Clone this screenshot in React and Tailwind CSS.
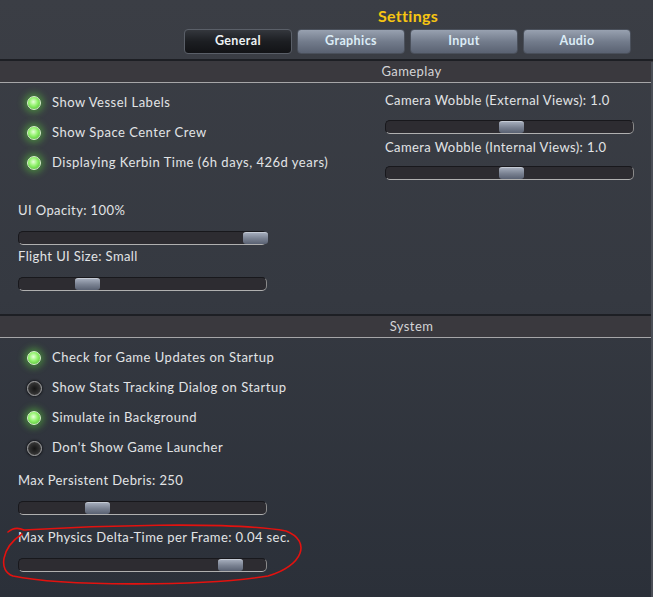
import React from 'react'

const FONT = { fontFamily: 'Lato, "Noto Sans", sans-serif' }

function Light({ on }) {
  return on ? (
    <span className="block w-[14px] h-[14px] rounded-full border border-[#d6f5c8] bg-[radial-gradient(circle_at_45%_40%,#e6ffd8_0%,#8ef068_45%,#44b02c_100%)] shadow-[0_0_7px_3px_rgba(96,220,60,0.45)]" />
  ) : (
    <span className="block w-[15px] h-[15px] rounded-full border border-[#a0a0a0] bg-[radial-gradient(circle_at_50%_50%,#151515_0%,#303030_55%,#626262_100%)] shadow-[0_0_2px_1px_rgba(0,0,0,0.5)]" />
  )
}

function Toggle({ on, label }) {
  return (
    <div className="flex items-center h-[30px]">
      <div className="w-[36px] flex justify-center">
        <Light on={on} />
      </div>
      <span className="text-[13px] text-[#e2e4e6] tracking-[0.5px]">{label}</span>
    </div>
  )
}

function Slider({ label, thumb, gap = 'mt-[13px]' }) {
  return (
    <div>
      <div className="h-[16px] leading-[16px] text-[13px] text-[#e2e4e6] tracking-[0.4px]">{label}</div>
      <div className={`relative ${gap} h-[14px] w-[249px] rounded-[5px] bg-[#2d2c31] border border-[#18181c] border-b-[#b0b0b0] border-r-[#8a8a8a]`}>
        <div
          className="absolute top-0 bottom-0 w-[25px] rounded-[3px] bg-gradient-to-b from-[#a3abba] via-[#7a8292] to-[#596172] border-t border-[#c4cad4]"
          style={{ left: thumb }}
        />
      </div>
    </div>
  )
}

function Header({ title }) {
  return (
    <div className="border-t-2 border-[#1d1f24]">
      <div className="h-[22px] bg-[#3a393e] border-b border-[#a6a6a8] flex items-center pl-[170px] justify-center">
        <span className="text-[13px] text-[#d4d4d6] tracking-[0.4px]">{title}</span>
      </div>
    </div>
  )
}

function Tab({ label, active }) {
  return active ? (
    <div className="w-[108px] h-[25px] rounded-[4px] border border-[#5a5f68] bg-gradient-to-b from-[#34373d] via-[#1c1e22] to-[#121316] flex items-center justify-center">
      <span className="text-[12.5px] font-bold text-[#eef2f4] tracking-[0.4px]">{label}</span>
    </div>
  ) : (
    <div className="w-[108px] h-[25px] rounded-[4px] border border-[#4a505b] bg-gradient-to-b from-[#98a1b0] via-[#737c8c] to-[#5a6272] flex items-center justify-center">
      <span className="text-[12.5px] font-bold text-[#dcecf6] tracking-[0.4px]">{label}</span>
    </div>
  )
}

export default function App() {
  return (
    <div className="relative w-[653px] h-[597px] overflow-hidden bg-gradient-to-b from-[#3b3e45] via-[#353941] to-[#2b3039]" style={FONT}>
      {/* Title and tabs */}
      <div className="h-[59px] pl-[184px] pt-[6px]">
        <div className="w-[448px] text-center text-[16px] font-bold leading-[20px] text-[#f7c512] tracking-[0.3px]">Settings</div>
        <div className="mt-[3px] flex gap-[5px]">
          <Tab label="General" active />
          <Tab label="Graphics" />
          <Tab label="Input" />
          <Tab label="Audio" />
        </div>
      </div>

      <Header title="Gameplay" />

      {/* Gameplay */}
      <div className="h-[231px] flex">
        <div className="w-[385px] pl-[18px]">
          <div className="-ml-[2px] pt-[5px]">
            <Toggle on label="Show Vessel Labels" />
            <Toggle on label="Show Space Center Crew" />
            <Toggle on label="Displaying Kerbin Time (6h days, 426d years)" />
          </div>
          <div className="mt-[24px] flex flex-col gap-[3px]">
            <Slider label="UI Opacity: 100%" thumb={224} />
            <Slider label="Flight UI Size: Small" thumb={56} />
          </div>
        </div>
        <div className="pt-[9px] flex flex-col gap-[5px]">
          <Slider label="Camera Wobble (External Views): 1.0" thumb={113} gap="mt-[12px]" />
          <Slider label="Camera Wobble (Internal Views): 1.0" thumb={113} gap="mt-[11px]" />
        </div>
      </div>

      <Header title="System" />

      {/* System */}
      <div className="pl-[16px] pt-[5px]">
        <Toggle on label="Check for Game Updates on Startup" />
        <Toggle label="Show Stats Tracking Dialog on Startup" />
        <Toggle on label="Simulate in Background" />
        <Toggle label="Don't Show Game Launcher" />
      </div>
      <div className="pl-[18px] mt-[9px] flex flex-col gap-[14px]">
        <Slider label="Max Persistent Debris: 250" thumb={66} />
        <Slider label="Max Physics Delta-Time per Frame: 0.04 sec." thumb={199} />
      </div>

      {/* red annotation */}
      <svg className="absolute inset-0 pointer-events-none" width="653" height="597" viewBox="0 0 653 597">
        <path
          d="M 8 532 Q 15 526 24 530 C 90 526 230 521 286 531 C 312 541 303 566 268 576 C 200 587 60 586 13 576 C -2 571 1 548 22 534"
          fill="none"
          stroke="#e3120f"
          strokeWidth="1.6"
          strokeLinecap="round"
        />
      </svg>
      <div className="absolute right-0 top-[62px] bottom-0 w-[2px] bg-[#4a4e56]" />
    </div>
  )
}
